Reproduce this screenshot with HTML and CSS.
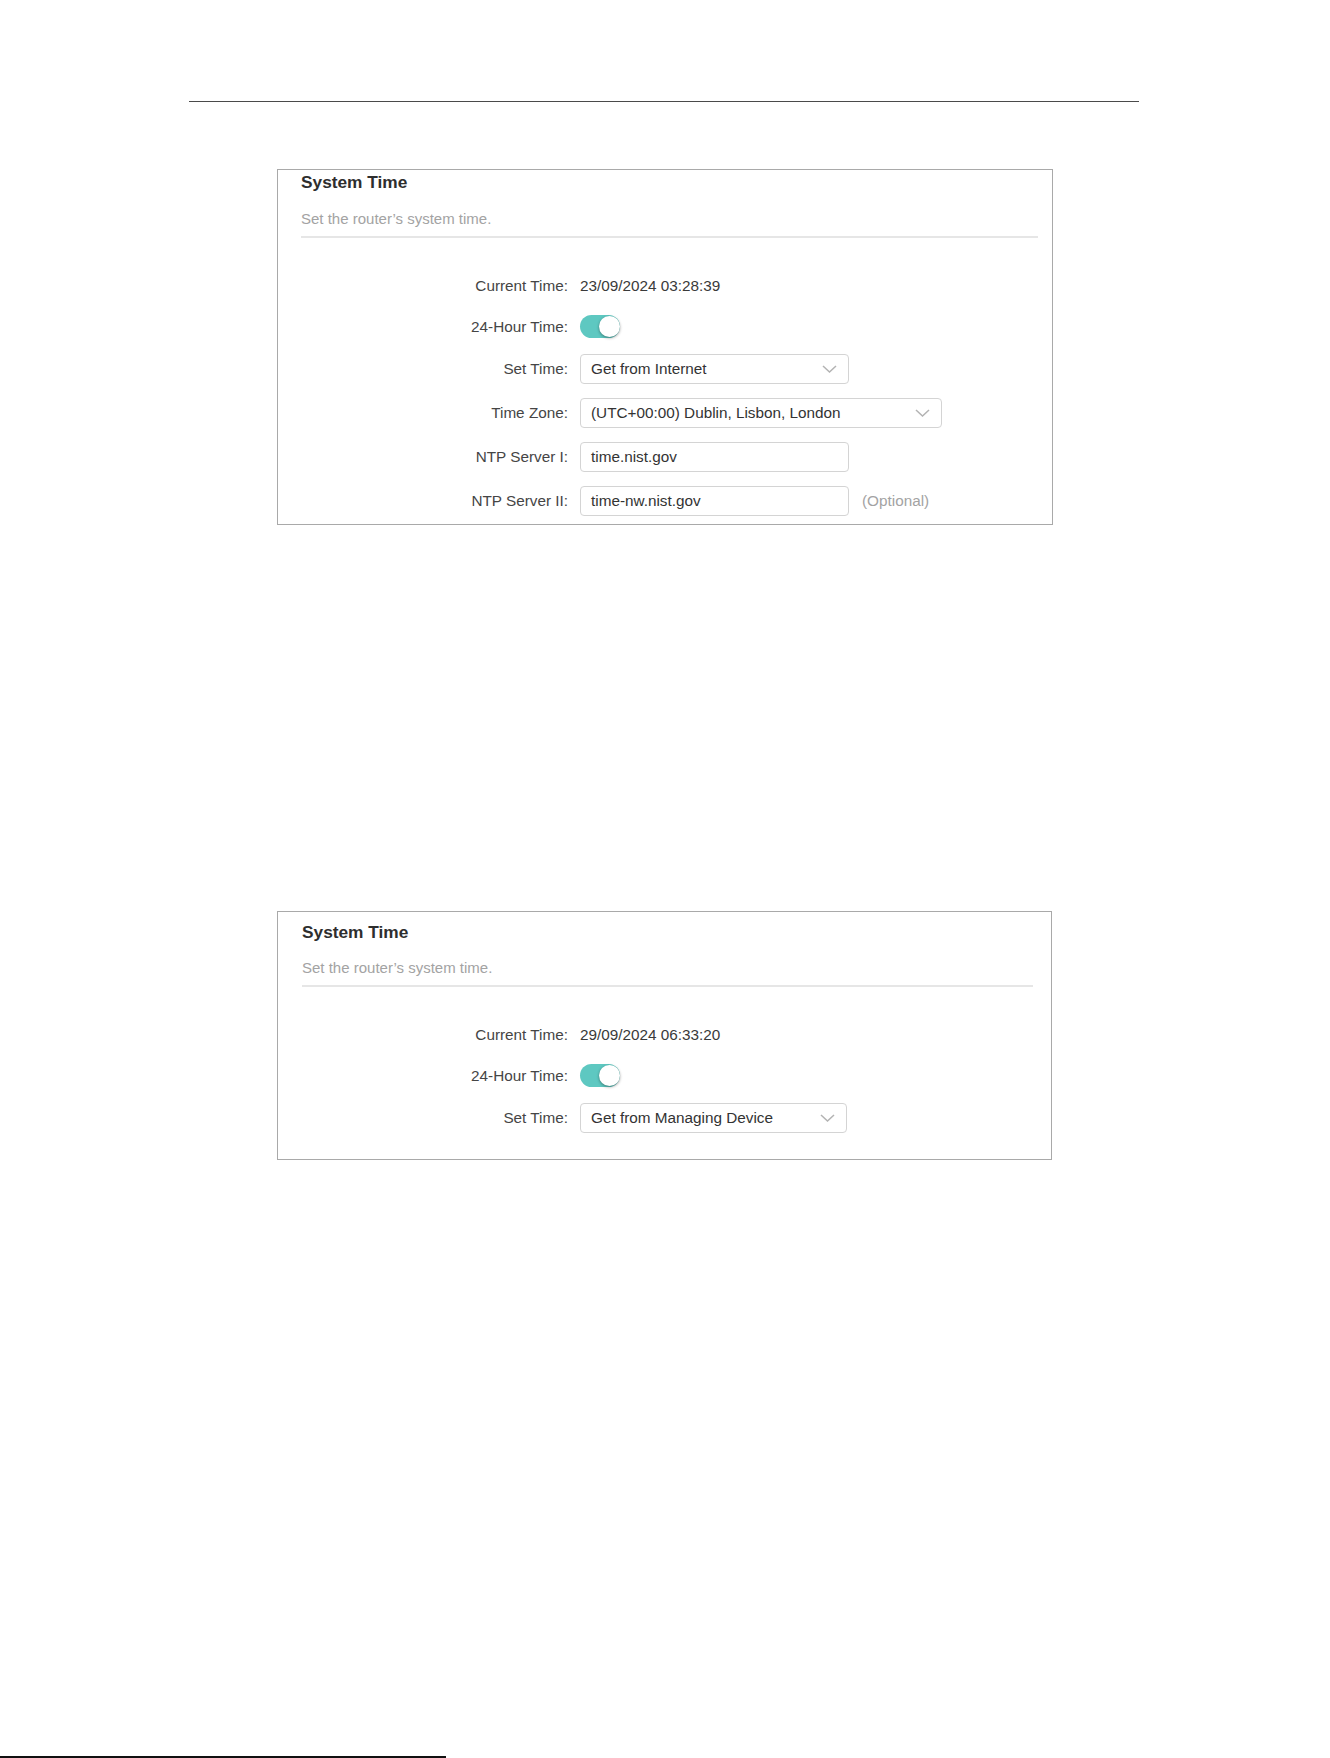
FILE: index.html
```html
<!DOCTYPE html>
<html lang="en">
<head>
<meta charset="utf-8">
<title>System Time</title>
<link rel="stylesheet" href="styles.css">
</head>
<body>
<div class="page">
  <div class="header-rule"></div>

  <section class="panel panel-internet">
    <div class="panel-head">
      <h2 class="panel-title">System Time</h2>
      <p class="panel-desc">Set the router’s system time.</p>
    </div>
    <div class="form">
      <div class="row row-text">
        <span class="label">Current Time:</span>
        <span class="value">23/09/2024 03:28:39</span>
      </div>
      <div class="row row-text">
        <span class="label">24-Hour Time:</span>
        <span class="toggle on"><span class="knob"></span></span>
      </div>
      <div class="row row-field">
        <span class="label">Set Time:</span>
        <div class="select w-268">
          <span>Get from Internet</span>
          <svg class="chevron" width="15" height="8" viewBox="0 0 15 8"><path d="M1 1 L7.5 7 L14 1" fill="none" stroke="#b3b3b3" stroke-width="1.5"/></svg>
        </div>
      </div>
      <div class="row row-field">
        <span class="label">Time Zone:</span>
        <div class="select w-362">
          <span>(UTC+00:00) Dublin, Lisbon, London</span>
          <svg class="chevron" width="15" height="8" viewBox="0 0 15 8"><path d="M1 1 L7.5 7 L14 1" fill="none" stroke="#b3b3b3" stroke-width="1.5"/></svg>
        </div>
      </div>
      <div class="row row-field">
        <span class="label">NTP Server I:</span>
        <div class="textbox w-268">time.nist.gov</div>
      </div>
      <div class="row row-field">
        <span class="label">NTP Server II:</span>
        <div class="textbox w-268">time-nw.nist.gov</div>
        <span class="hint">(Optional)</span>
      </div>
    </div>
  </section>

  <section class="panel panel-device">
    <div class="panel-head">
      <h2 class="panel-title">System Time</h2>
      <p class="panel-desc">Set the router’s system time.</p>
    </div>
    <div class="form">
      <div class="row row-text">
        <span class="label">Current Time:</span>
        <span class="value">29/09/2024 06:33:20</span>
      </div>
      <div class="row row-text">
        <span class="label">24-Hour Time:</span>
        <span class="toggle on"><span class="knob"></span></span>
      </div>
      <div class="row row-field">
        <span class="label">Set Time:</span>
        <div class="select w-266">
          <span>Get from Managing Device</span>
          <svg class="chevron" width="15" height="8" viewBox="0 0 15 8"><path d="M1 1 L7.5 7 L14 1" fill="none" stroke="#b3b3b3" stroke-width="1.5"/></svg>
        </div>
      </div>
    </div>
  </section>

  <div class="footer-rule"></div>
</div>
</body>
</html>
```

FILE: styles.css
```css
html, body {
  margin: 0;
  padding: 0;
  overflow: hidden;
  background: #ffffff;
}

body {
  font-family: "Liberation Sans", Arial, sans-serif;
  color: #333333;
}

.page {
  width: 1330px;
  height: 1758px;
  padding-top: 101px;
  box-sizing: border-box;
}

.header-rule {
  margin-left: 189px;
  width: 950px;
  height: 1px;
  background: #4a4a4a;
}

/* settings card */
.panel {
  box-sizing: border-box;
  margin-left: 277px;
  border: 1px solid #a9a9a9;
  background: #ffffff;
}

.panel-internet {
  margin-top: 67px;
  width: 776px;
  padding: 2px 14px 8px 23px;
}

.panel-device {
  margin-top: 386px;
  width: 775px;
  padding: 10px 18px 26px 24px;
}

.panel-head {
  border-bottom: 2px solid #e6e6e6;
  padding-bottom: 8px;
}

.panel-title {
  margin: 0;
  font-size: 17.3px;
  line-height: 20px;
  font-weight: 700;
  color: #2e2e2e;
}

.panel-desc {
  margin: 18px 0 0;
  font-size: 15px;
  line-height: 18px;
  color: #a3a3a3;
}

.panel-device .panel-desc {
  margin-top: 17px;
}

/* label / control rows */
.form {
  margin-top: 34px;
  display: flex;
  flex-direction: column;
  gap: 14px;
}

.row {
  display: flex;
  align-items: center;
  gap: 12px;
  font-size: 15.3px;
}

.row-text {
  height: 27px;
}

.row-field {
  height: 30px;
}

.label {
  flex: none;
  width: 267px;
  text-align: right;
  color: #454545;
}

.panel-device .label {
  width: 266px;
}

.value {
  color: #3a3a3a;
}

.hint {
  margin-left: 1px;
  color: #a3a3a3;
}

/* switch */
.toggle {
  position: relative;
  flex: none;
  width: 40px;
  height: 23px;
  border-radius: 12px;
  background: #5ec8c1;
}

.toggle .knob {
  position: absolute;
  top: 1px;
  right: 0;
  width: 21px;
  height: 21px;
  border-radius: 50%;
  background: #ffffff;
  box-shadow: 0 1px 3px rgba(0, 0, 0, 0.4);
}

/* dropdowns and text boxes */
.select,
.textbox {
  box-sizing: border-box;
  flex: none;
  height: 30px;
  border: 1px solid #d4d4d4;
  border-radius: 4px;
  padding: 0 11px 0 10px;
  display: flex;
  align-items: center;
  color: #333333;
  background: #ffffff;
}

.select {
  justify-content: space-between;
}

.chevron {
  display: block;
  flex: none;
}

.w-268 { width: 269px; }
.w-266 { width: 267px; }
.w-362 { width: 362px; }

.footer-rule {
  margin-top: 596px;
  width: 446px;
  height: 2px;
  background: #111111;
}
```
